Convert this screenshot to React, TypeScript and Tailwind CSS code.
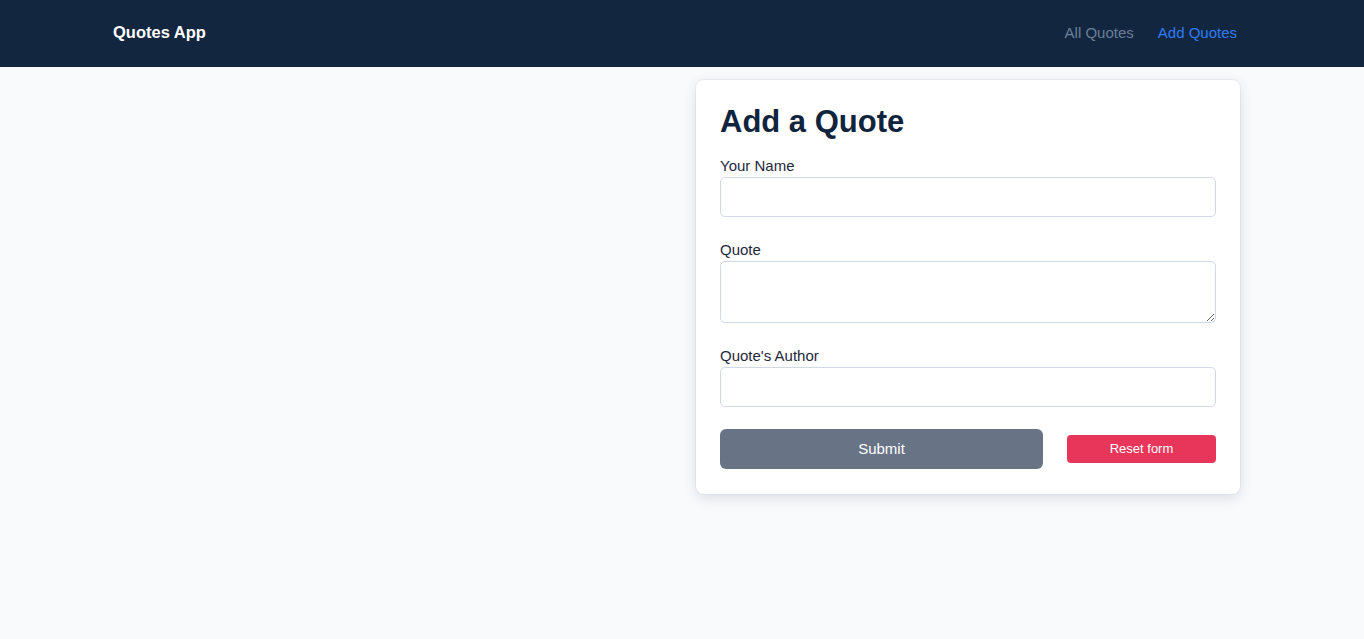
export default function App() {
  const font = { fontFamily: '"Liberation Sans", Arial, sans-serif' };
  return (
    <div className="min-h-[639px] bg-[#f8fafc]" style={font}>
      <header className="h-[67px] bg-[#12263f] flex items-center justify-between pl-[113px] pr-[127px] pb-[2px]">
        <div className="text-white font-bold text-[16.5px] leading-none">Quotes App</div>
        <nav className="flex items-center gap-6 text-[15px] leading-none">
          <a className="text-[#6b7f99]">All Quotes</a>
          <a className="text-[#2f7cf6]">Add Quotes</a>
        </nav>
      </header>
      <main className="ml-[112px] w-[1128px] grid grid-cols-2 gap-10 pt-[13px]">
        <div></div>
        <div className="bg-white rounded-lg shadow-[0_4px_14px_rgba(15,23,42,0.12),0_0_0_1px_#eef1f5] p-6 pb-[25px]">
          <h1 className="text-[31px] leading-[36px] font-bold text-[#11243d] mb-[17px]">Add a Quote</h1>
          <label className="block text-[15px] leading-[18px] text-[#1e293b] mb-[2px]">Your Name</label>
          <input className="block w-full h-[40px] border border-[#cfdae6] rounded-[5px] bg-white px-3" />
          <label className="block text-[15px] leading-[18px] text-[#1e293b] mt-6 mb-[2px]">Quote</label>
          <textarea className="block w-full h-[62px] border border-[#cfdae6] rounded-[5px] bg-white px-3 py-2" />
          <label className="block text-[15px] leading-[18px] text-[#1e293b] mt-6 mb-[2px]">Quote's Author</label>
          <input className="block w-full h-[40px] border border-[#cfdae6] rounded-[5px] bg-white px-3" />
          <div className="flex items-center gap-6 mt-[22px]">
            <button className="w-[323px] h-[40px] rounded-[6px] bg-[#687485] text-white text-[15px]">Submit</button>
            <button className="flex-1 h-[28px] rounded-[4px] bg-[#e8365a] text-white text-[13px]">Reset form</button>
          </div>
        </div>
      </main>
    </div>
  );
}
